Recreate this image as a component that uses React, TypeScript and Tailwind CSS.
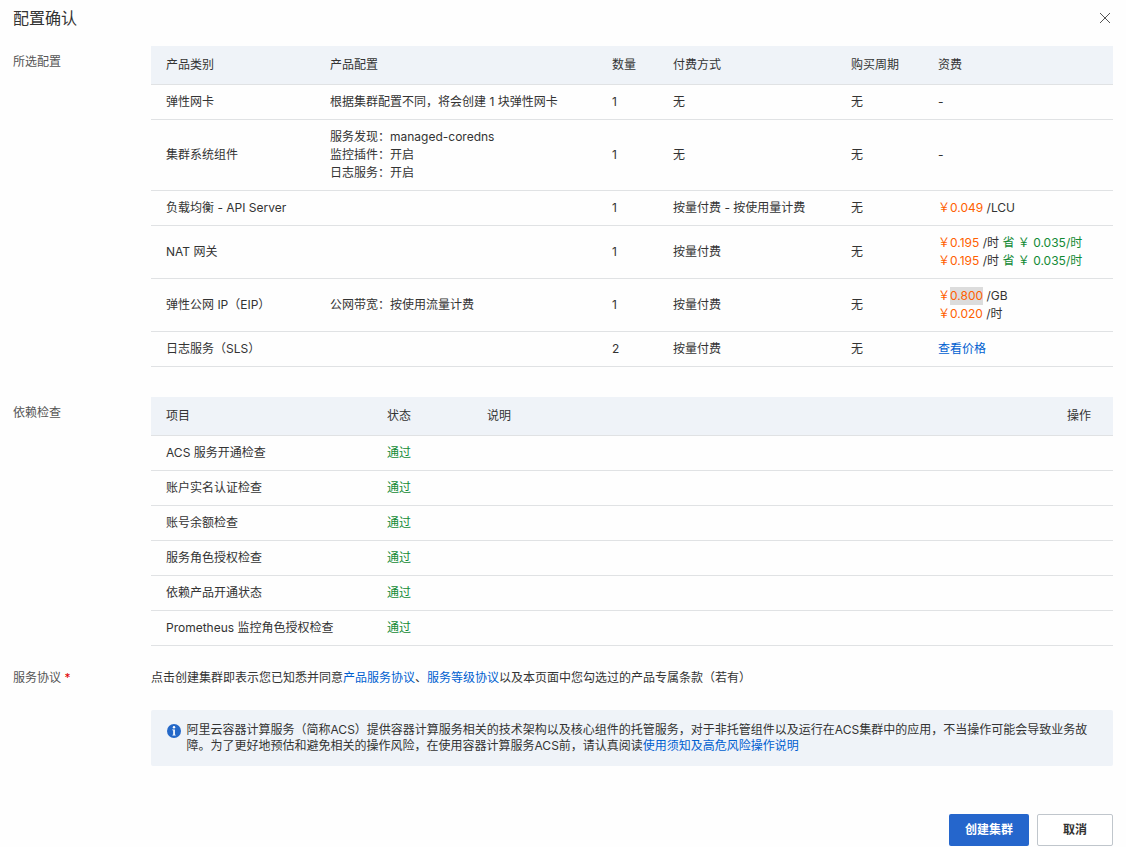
import type { ReactNode } from "react";

const Price = ({
  value,
  unit,
  save,
  selected,
}: {
  value: string;
  unit: string;
  save?: string;
  selected?: boolean;
}) => (
  <p className="whitespace-nowrap">
    <span className="text-[#ff6000]">
      ￥<span className={selected ? "inline-block bg-[#dcdcdc]" : ""}>{value}</span>
    </span>{" "}
    /{unit}
    {save && <span className="text-[#128a35]"> 省 ￥ {save}</span>}
  </p>
);

type Product = {
  name: string;
  config?: ReactNode;
  count: number;
  pay: string;
  price: ReactNode;
};

const products: Product[] = [
  {
    name: "弹性网卡",
    config: "根据集群配置不同，将会创建 1 块弹性网卡",
    count: 1,
    pay: "无",
    price: "-",
  },
  {
    name: "集群系统组件",
    config: (
      <>
        <p>服务发现：managed-coredns</p>
        <p>监控插件：开启</p>
        <p>日志服务：开启</p>
      </>
    ),
    count: 1,
    pay: "无",
    price: "-",
  },
  {
    name: "负载均衡 - API Server",
    count: 1,
    pay: "按量付费 - 按使用量计费",
    price: <Price value="0.049" unit="LCU" />,
  },
  {
    name: "NAT 网关",
    count: 1,
    pay: "按量付费",
    price: (
      <>
        <Price value="0.195" unit="时" save="0.035/时" />
        <Price value="0.195" unit="时" save="0.035/时" />
      </>
    ),
  },
  {
    name: "弹性公网 IP（EIP）",
    config: "公网带宽：按使用流量计费",
    count: 1,
    pay: "按量付费",
    price: (
      <>
        <Price value="0.800" unit="GB" selected />
        <Price value="0.020" unit="时" />
      </>
    ),
  },
  {
    name: "日志服务（SLS）",
    count: 2,
    pay: "按量付费",
    price: <a className="text-[#0060d0]">查看价格</a>,
  },
];

const checks = [
  "ACS 服务开通检查",
  "账户实名认证检查",
  "账号余额检查",
  "服务角色授权检查",
  "依赖产品开通状态",
  "Prometheus 监控角色授权检查",
];

const productCols =
  "grid grid-cols-[164px_282px_61px_178px_87px_1fr] items-center border-b border-[#e0e2e4] *:pl-[15px]";
const checkCols =
  "grid grid-cols-[221px_100px_580px_1fr] items-center border-b border-[#e0e2e4] *:pl-[15px]";

const Section = ({ label, children }: { label: ReactNode; children: ReactNode }) => (
  <section className="flex">
    <div className="w-[138px] shrink-0 pt-[7px] text-[#555]">{label}</div>
    <div className="w-[962px]">{children}</div>
  </section>
);

const App = () => {
  return (
    <div
      lang="zh-CN"
      className="h-[847px] w-[1126px] overflow-hidden bg-[#fefefe] pl-[13px] font-['Inter','Noto_Sans_CJK_SC',sans-serif] text-xs leading-[18px] text-[#333]"
    >
      <header className="flex h-[46px] items-start justify-between pr-4 pt-1.5">
        <h1 className="text-base leading-6">配置确认</h1>
        <svg
          className="mt-[7px] size-[10px]"
          viewBox="0 0 10 10"
          fill="none"
          stroke="#555"
          strokeWidth="1"
        >
          <path d="M0 0l10 10M10 0L0 10" />
        </svg>
      </header>

      <Section label="所选配置">
        <div className={`${productCols} h-[39px] bg-[#eff3f8]`}>
          <p>产品类别</p>
          <p>产品配置</p>
          <p>数量</p>
          <p>付费方式</p>
          <p>购买周期</p>
          <p>资费</p>
        </div>
        {products.map((item) => (
          <div key={item.name} className={`${productCols} py-2`}>
            <div>{item.name}</div>
            <div>{item.config}</div>
            <div>{item.count}</div>
            <div>{item.pay}</div>
            <div>无</div>
            <div>{item.price}</div>
          </div>
        ))}
      </Section>

      <div className="mt-[30px]">
        <Section label="依赖检查">
          <div className={`${checkCols} h-[39px] bg-[#eff3f8]`}>
            <p>项目</p>
            <p>状态</p>
            <p>说明</p>
            <p>操作</p>
          </div>
          {checks.map((name) => (
            <div key={name} className={`${checkCols} py-2`}>
              <p>{name}</p>
              <p className="text-[#128a35]">通过</p>
            </div>
          ))}
        </Section>
      </div>

      <div className="mt-4">
        <Section
          label={
            <>
              服务协议 <span className="text-[#e00000]">*</span>
            </>
          }
        >
          <p className="pt-[7px]">
            点击创建集群即表示您已知悉并同意
            <a className="text-[#0060d0]">产品服务协议</a>、
            <a className="text-[#0060d0]">服务等级协议</a>
            以及本页面中您勾选过的产品专属条款（若有）
          </p>
          <div className="mt-[23px] flex h-14 gap-[6px] rounded-[2px] bg-[#eff3f8] pl-[15.5px] pt-3">
            <svg className="mt-[2px] size-[14px] shrink-0" viewBox="0 0 14 14">
              <circle cx="7" cy="7" r="7" fill="#2468c8" />
              <circle cx="7" cy="3.3" r="1.2" fill="#fff" />
              <path d="M5.2 5.4h2.7v5.4h.8v.8H5.4v-.8h.8V6.2h-1z" fill="#fff" />
            </svg>
            <p className="w-[906px] leading-4">
              阿里云容器计算服务（简称ACS）提供容器计算服务相关的技术架构以及核心组件的托管服务，对于非托管组件以及运行在ACS集群中的应用，不当操作可能会导致业务故障。为了更好地预估和避免相关的操作风险，在使用容器计算服务ACS前，请认真阅读
              <a className="text-[#0060d0]">使用须知及高危风险操作说明</a>
            </p>
          </div>
        </Section>
      </div>

      <footer className="mt-12 flex justify-end gap-2 pr-[13px]">
        <button className="h-8 w-20 rounded-[2px] bg-[#2566cc] font-bold text-white">
          创建集群
        </button>
        <button className="h-8 w-[76px] rounded-[2px] border border-[#c0c6cc] bg-white font-bold">
          取消
        </button>
      </footer>
    </div>
  );
};

export default App;
